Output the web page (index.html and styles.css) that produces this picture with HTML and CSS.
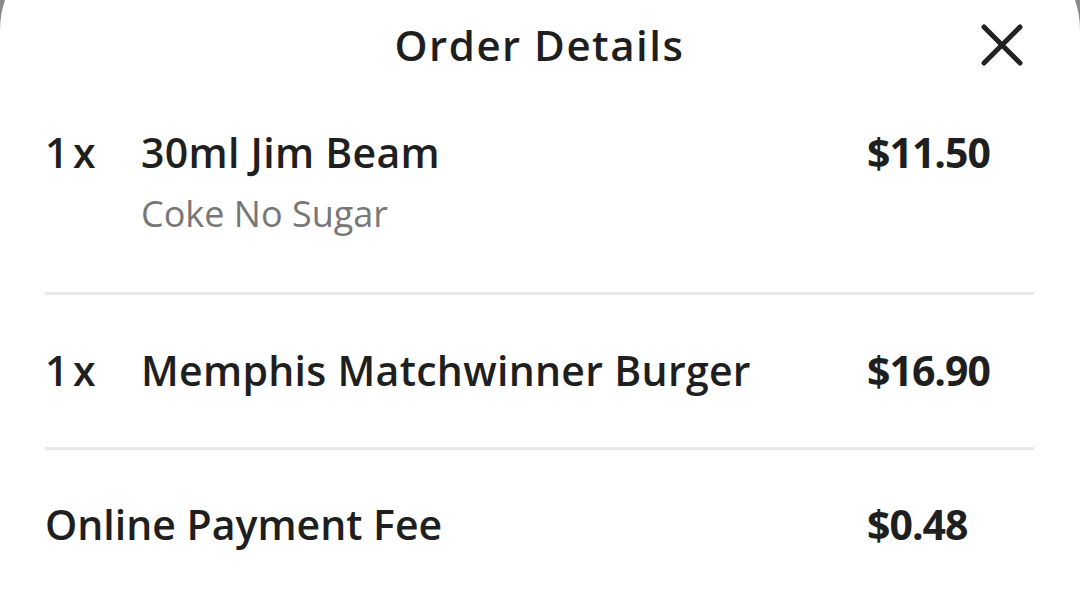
FILE: index.html
```html
<!DOCTYPE html>
<html lang="en">
<head>
  <meta charset="UTF-8">
  <meta name="viewport" content="width=device-width, initial-scale=1.0">
  <title>Order Details</title>
  <link rel="stylesheet" href="styles.css">
</head>
<body>
  <div class="sheet">
    <div class="sheet-header">
      <span></span>
      <h1>Order Details</h1>
      <button class="close-button" aria-label="Close">
        <svg width="44" height="44" viewBox="0 0 44 44">
          <path d="M4 4 L40 40 M40 4 L4 40" stroke="#222" stroke-width="5" stroke-linecap="round" fill="none"/>
        </svg>
      </button>
    </div>

    <div class="order-item first">
      <span class="qty">1 x</span>
      <div class="item-info">
        <div class="item-name">30ml Jim Beam</div>
        <div class="item-option">Coke No Sugar</div>
      </div>
      <span class="price">$11.50</span>
    </div>

    <div class="order-item">
      <span class="qty">1 x</span>
      <div class="item-info">
        <div class="item-name">Memphis Matchwinner Burger</div>
      </div>
      <span class="price">$16.90</span>
    </div>

    <div class="fee-row">
      <span class="fee-name">Online Payment Fee</span>
      <span class="price">$0.48</span>
    </div>
  </div>
</body>
</html>
```

FILE: styles.css
```css
body {
  margin: 0;
  background-color: #8a8a8a;
  font-family: 'Open Sans', 'Noto Sans', sans-serif;
  color: #1f1f1f;
  overflow: hidden;
}
.sheet {
  background-color: #fff;
  border-radius: 92px 92px 0 0;
  margin-top: -62px;
  padding: 62px 46px 0 45px;
  min-height: 700px;
}
.sheet-header {
  display: grid;
  grid-template-columns: 1fr auto 1fr;
  align-items: center;
  height: 90px;
}
.sheet-header h1 {
  margin: 0;
  font-size: 42px;
  font-weight: 600;
  letter-spacing: 1.5px;
  line-height: 1;
}
.close-button {
  justify-self: end;
  margin-right: 10px;
  background: none;
  border: none;
  padding: 0;
  width: 44px;
  height: 44px;
  cursor: pointer;
}
.order-item {
  display: grid;
  grid-template-columns: 96px 1fr 167px;
  padding: 50px 0 52px;
  border-bottom: 3px solid #e8e8e8;
  font-size: 41px;
  font-weight: 600;
  line-height: 50px;
}
.order-item.first {
  padding: 37px 0 56px;
}
.qty {
  word-spacing: -6px;
}
.item-name {
  letter-spacing: 0.3px;
}
.item-option {
  margin-top: 15px;
  font-size: 36px;
  font-weight: 400;
  line-height: 44px;
  color: #777;
}
.price {
  font-weight: 700;
  letter-spacing: -1px;
}
.fee-row {
  display: grid;
  grid-template-columns: 1fr 167px;
  padding-top: 49px;
  font-size: 41px;
  font-weight: 600;
  line-height: 50px;
}
```
